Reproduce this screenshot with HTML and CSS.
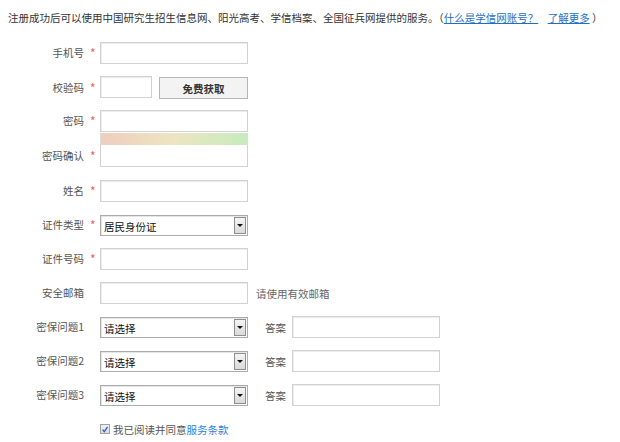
FILE: index.html
```html
<!DOCTYPE html>
<html lang="zh-CN">
<head>
<meta charset="utf-8">
<title>注册</title>
<link rel="stylesheet" href="styles.css">
</head>
<body>
<p class="intro">注册成功后可以使用中国研究生招生信息网、阳光高考、学信档案、全国征兵网提供的服务。（<a href="#">什么是学信网账号？</a>&nbsp;&nbsp;&nbsp;&nbsp;<a href="#">了解更多</a> ）</p>
<form class="form">
  <div class="row">
    <label class="lbl">手机号</label><span class="star">*</span>
    <input class="ipt" type="text">
  </div>
  <div class="row">
    <label class="lbl">校验码</label><span class="star">*</span>
    <div class="code">
      <input class="ipt short" type="text">
      <button type="button" class="btn">免费获取</button>
    </div>
  </div>
  <div class="row pw">
    <label class="lbl">密码</label><span class="star">*</span>
    <input class="ipt" type="password">
  </div>
  <div class="row strength-row">
    <span></span><span></span>
    <div class="strength"></div>
  </div>
  <div class="row confirm">
    <label class="lbl">密码确认</label><span class="star">*</span>
    <input class="ipt notop" type="password">
  </div>
  <div class="row">
    <label class="lbl">姓名</label><span class="star">*</span>
    <input class="ipt" type="text">
  </div>
  <div class="row">
    <label class="lbl">证件类型</label><span class="star">*</span>
    <div class="sel"><span class="sel-text">居民身份证</span><span class="arrow"></span></div>
  </div>
  <div class="row">
    <label class="lbl">证件号码</label><span class="star">*</span>
    <input class="ipt" type="text">
  </div>
  <div class="row">
    <label class="lbl">安全邮箱</label><span class="star"></span>
    <input class="ipt" type="text">
    <span class="hint">请使用有效邮箱</span>
  </div>
  <div class="row">
    <label class="lbl">密保问题1</label><span class="star"></span>
    <div class="sel"><span class="sel-text">请选择</span><span class="arrow"></span></div>
    <div class="answer"><span class="alabel">答案</span><input class="ipt" type="text"></div>
  </div>
  <div class="row">
    <label class="lbl">密保问题2</label><span class="star"></span>
    <div class="sel"><span class="sel-text">请选择</span><span class="arrow"></span></div>
    <div class="answer"><span class="alabel">答案</span><input class="ipt" type="text"></div>
  </div>
  <div class="row">
    <label class="lbl">密保问题3</label><span class="star"></span>
    <div class="sel"><span class="sel-text">请选择</span><span class="arrow"></span></div>
    <div class="answer"><span class="alabel">答案</span><input class="ipt" type="text"></div>
  </div>
  <div class="row agree-row">
    <span></span><span></span>
    <div class="agree">
      <span class="check"><svg width="9" height="9" viewBox="0 0 9 9"><path d="M1.8 4.6 L3.7 7 L7.4 1.6" fill="none" stroke="#2f62c8" stroke-width="1.5"/></svg></span>
      <span>我已阅读并同意</span><a href="#" class="terms">服务条款</a>
    </div>
  </div>
</form>
</body>
</html>
```
FILE: styles.css
```css
html, body {
  margin: 0;
  padding: 0;
  background: #fff;
}
body {
  font-family: "Noto Sans CJK SC", "Noto Sans", sans-serif;
  font-size: 10.5px;
  color: #555;
}
.intro {
  margin: 0;
  padding: 10px 0 0 8px;
  line-height: 16px;
  color: #333;
  white-space: nowrap;
}
.intro a {
  color: #1f6fc6;
  text-decoration: underline;
}
.form {
  margin-top: 16px;
}
.row {
  display: grid;
  grid-template-columns: 84px 16px 148px auto;
  align-items: center;
  height: 22px;
  margin-bottom: 12px;
}
.lbl {
  text-align: right;
  color: #555;
  line-height: 22px;
}
.star {
  color: #f06060;
  font-size: 12px;
  padding-left: 6px;
  line-height: 22px;
}
.ipt {
  box-sizing: border-box;
  width: 148px;
  height: 22px;
  margin: 0;
  padding: 0 3px;
  border: 1px solid #d2d2d2;
  box-shadow: inset 1px 1px 0 #ececec;
  background: #fff;
  font: inherit;
  outline: none;
}
.code {
  display: flex;
  gap: 7px;
}
.ipt.short {
  width: 52px;
}
.btn {
  box-sizing: border-box;
  width: 89px;
  height: 22px;
  margin: 1px 0 0 0;
  padding: 0;
  border: 1px solid #b5b5b5;
  background: #f3f3f3;
  font: inherit;
  font-weight: bold;
  color: #333;
}
.row.pw {
  margin-bottom: 1px;
}
.strength-row {
  height: 12px;
  margin-bottom: 0;
}
.strength {
  height: 12px;
  width: 148px;
  box-sizing: border-box;
  border-left: 1px solid #dcdcdc;
  border-right: 1px solid #dcdcdc;
  background: linear-gradient(to right, #efcdbf, #ece5c2 50%, #c8ebbe);
}
.row.confirm {
  margin-bottom: 13px;
}
.ipt.notop {
  border-top: none;
  box-shadow: none;
}
.sel {
  box-sizing: border-box;
  width: 148px;
  height: 21px;
  border: 1px solid #acacac;
  box-shadow: inset 1px 1px 0 #e6e6e6;
  display: flex;
  align-items: center;
  justify-content: space-between;
  background: #fff;
}
.sel-text {
  color: #111;
  padding: 4px 0 0 3px;
  line-height: 16px;
}
.arrow {
  box-sizing: border-box;
  width: 12px;
  height: 17px;
  margin-right: 1px;
  border: 1px solid #8f8f8f;
  background: linear-gradient(#f4f4f4, #d9d9d9);
  display: flex;
  align-items: center;
  justify-content: center;
}
.arrow::after {
  content: "";
  width: 0;
  height: 0;
  border-left: 3px solid transparent;
  border-right: 3px solid transparent;
  border-top: 3px solid #111;
}
.hint {
  margin-left: 8px;
  color: #666;
}
.answer {
  display: flex;
  align-items: center;
  margin-left: 17px;
}
.alabel {
  width: 27px;
  color: #555;
}
.agree {
  display: flex;
  align-items: center;
  color: #555;
  white-space: nowrap;
}
.check {
  box-sizing: border-box;
  width: 10px;
  height: 10px;
  border: 1px solid #a0a0a0;
  background: linear-gradient(#f2f2f2, #dcdcdc);
  display: flex;
  align-items: center;
  justify-content: center;
  margin-right: 3px;
}
.check svg {
  display: block;
}
.terms {
  color: #2d83e0;
  text-decoration: none;
}
```
